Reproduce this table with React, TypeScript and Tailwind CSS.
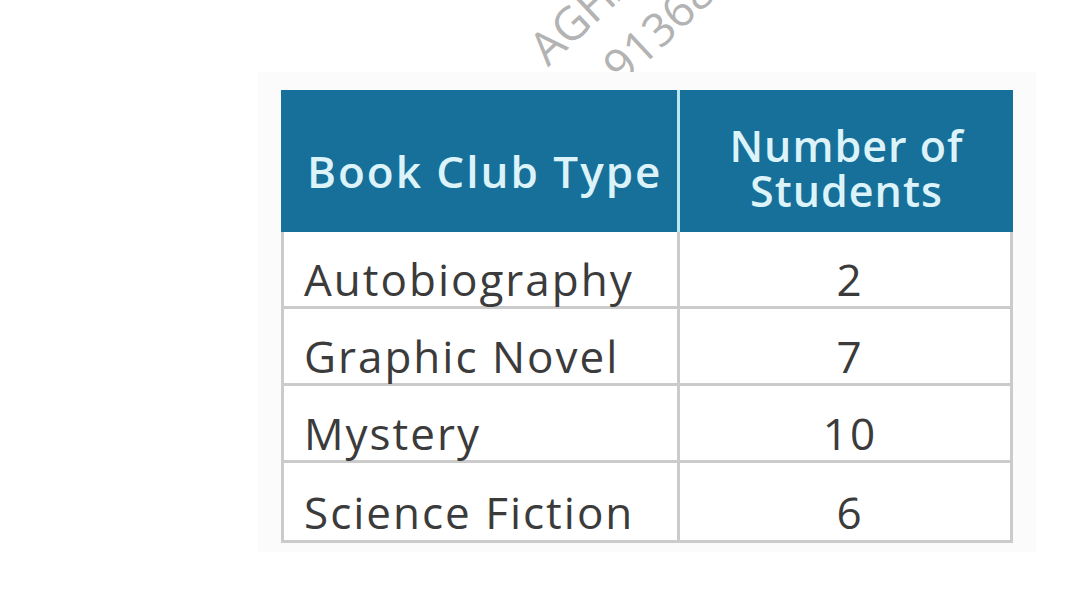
const rows = [
  { type: 'Autobiography', count: 2 },
  { type: 'Graphic Novel', count: 7 },
  { type: 'Mystery', count: 10 },
  { type: 'Science Fiction', count: 6 },
];

export default function App() {
  return (
    <div className="relative w-[1080px] h-[595px] overflow-hidden bg-white" style={{ fontFamily: '"Open Sans", "Liberation Sans", sans-serif' }}>
      {/* watermark */}
      <div className="absolute left-[552px] top-[24px] h-[48px] -rotate-[43deg] origin-bottom-left text-[#b3b3b3] text-[46px] leading-[48px] whitespace-nowrap">
        AGHA
      </div>
      <div className="absolute left-[626px] top-[42px] h-[48px] -rotate-[43deg] origin-bottom-left text-[#b3b3b3] text-[46px] leading-[48px] whitespace-nowrap">
        91368
      </div>

      <div className="relative pt-[72px] pl-[258px]">
        <div className="w-[778px] h-[480px] bg-[#fbfbfb] pt-[18px] pl-[23px]">
          <div className="w-[732px] border-[3px] border-t-0 border-[#cbcbcb] bg-white tracking-[2px]">
            {/* header */}
            <div className="grid grid-cols-[399px_333px] h-[142px] bg-[#16709a] -mx-[3px] w-[732px] text-[#dcf3f9] font-semibold">
              <div className="flex items-center pl-[26px] pt-[20px] border-r-[3px] border-[#b9e6f1] text-[44px]">
                Book Club Type
              </div>
              <div className="flex flex-col items-center justify-center pt-[14px] text-[43px] leading-[45px] tracking-[1px]">
                <span>Number of</span>
                <span>Students</span>
              </div>
            </div>
            {/* body */}
            {rows.map((r, i) => (
              <div
                key={r.type}
                className={`grid grid-cols-[396px_330px] h-[77px] text-[#3b3b3b] text-[44px] leading-[44px] ${i < rows.length - 1 ? 'border-b-[3px] border-[#cbcbcb]' : ''}`}
              >
                <div className="flex items-center pl-[20px] pt-[20px] border-r-[3px] border-[#cbcbcb]">{r.type}</div>
                <div className="flex items-center justify-center pl-[10px] pt-[20px]">{r.count}</div>
              </div>
            ))}
          </div>
        </div>
      </div>
    </div>
  );
}
